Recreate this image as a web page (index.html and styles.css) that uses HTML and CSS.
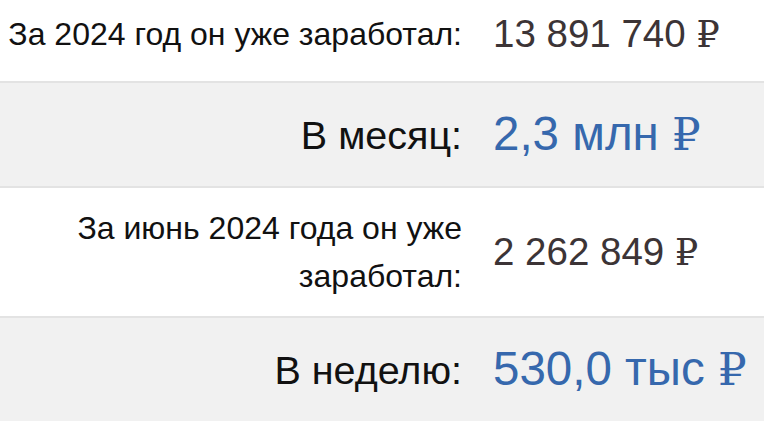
FILE: index.html
```html
<!DOCTYPE html>
<html lang="ru">
<head>
<meta charset="utf-8">
<link rel="stylesheet" href="styles.css">
</head>
<body>
<div class="stats">
  <div class="row row-first">
    <div class="label small">За 2024 год он уже заработал:</div>
    <div class="value dark">13 891 740 <span class="rub">₽</span></div>
  </div>
  <div class="row alt">
    <div class="label">В месяц:</div>
    <div class="value blue">2,3 млн <span class="rub">₽</span></div>
  </div>
  <div class="row tall">
    <div class="label small">За июнь 2024 года он уже заработал:</div>
    <div class="value dark">2 262 849 <span class="rub">₽</span></div>
  </div>
  <div class="row alt">
    <div class="label">В неделю:</div>
    <div class="value blue">530,0 тыс <span class="rub">₽</span></div>
  </div>
</div>
</body>
</html>
```

FILE: styles.css
```css
html, body {
  margin: 0;
  padding: 0;
  background: #ffffff;
  overflow: hidden;
}

body {
  font-family: "Liberation Sans", Arial, sans-serif;
  width: 764px;
  height: 421px;
}

.stats {
  display: flex;
  flex-direction: column;
}

.row {
  display: grid;
  grid-template-columns: 462px 1fr;
  align-items: center;
  height: 103px;
  border-bottom: 2px solid #e3e3e3;
  background: #ffffff;
}

.row-first {
  padding-bottom: 13px;
  height: 68px;
}

.row.alt {
  background: #f1f1f1;
}

.row.tall {
  height: 128px;
}

.label {
  text-align: right;
  color: #111111;
  font-size: 39.5px;
  line-height: 48px;
  padding-left: 4px;
}

.label.small {
  font-size: 32px;
}

.value {
  padding-left: 31px;
  line-height: 1.1;
  white-space: nowrap;
}

.value.dark {
  color: #3c3436;
  font-size: 38.5px;
}

.value.blue {
  color: #3668ad;
  font-size: 47.5px;
}

.rub {
  font-family: "Liberation Serif", "DejaVu Serif", serif;
  font-size: 0.95em;
}
```
